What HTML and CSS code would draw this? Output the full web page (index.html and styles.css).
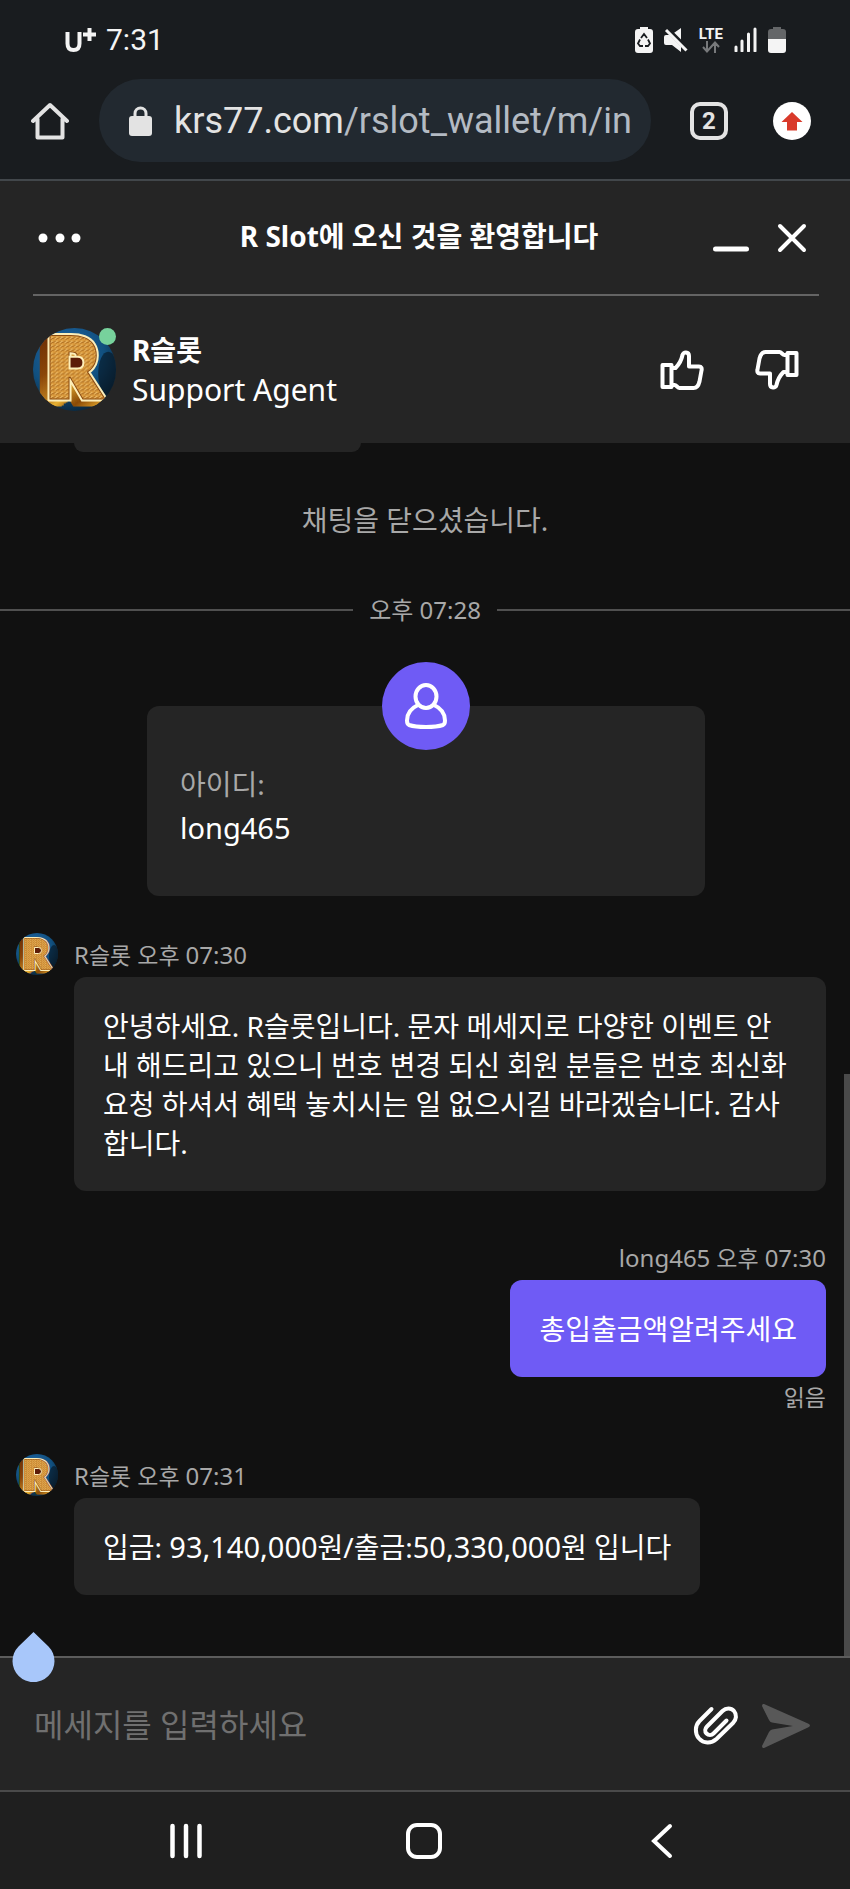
FILE: index.html
```html
<!DOCTYPE html>
<html lang="ko">
<head>
<meta charset="utf-8">
<meta name="viewport" content="width=device-width, initial-scale=1">
<title>R Slot</title>
<link rel="stylesheet" href="styles.css">
</head>
<body>
<svg class="defs" aria-hidden="true">
  <defs>
    <linearGradient id="gold" x1="0" y1="0" x2="1" y2="1">
      <stop offset="0" stop-color="#5c2204"/><stop offset=".3" stop-color="#8a4508"/>
      <stop offset=".55" stop-color="#e9b233"/><stop offset=".75" stop-color="#8a4a06"/>
      <stop offset="1" stop-color="#dda02a"/>
    </linearGradient>
    <radialGradient id="blue" cx=".4" cy=".3" r=".75">
      <stop offset="0" stop-color="#2368a8"/><stop offset=".6" stop-color="#11507f"/><stop offset="1" stop-color="#0a2438"/>
    </radialGradient>
    <pattern id="weave" width="5" height="4" patternUnits="userSpaceOnUse">
      <rect width="5" height="4" fill="#dc9c3e"/>
      <path d="M0 3l3-2M3 4l2-2" stroke="#a8681f" stroke-width="1"/>
      <path d="M2 3l3-2" stroke="#f3c878" stroke-width="1"/>
    </pattern>
    <clipPath id="disc"><circle cx="42" cy="42" r="42"/></clipPath>
    <symbol id="avatar" viewBox="0 0 84 84">
      <g clip-path="url(#disc)">
        <rect width="84" height="84" fill="url(#blue)"/>
        <ellipse cx="76" cy="46" rx="10" ry="22" fill="#07121c" opacity=".6"/>
        <g class="logo-letter" stroke="url(#gold)" fill="url(#gold)" stroke-width="10">
          <text x="5" y="75">R</text><text x="7" y="74">R</text><text x="9" y="72">R</text><text x="11" y="71">R</text>
        </g>
        <text class="logo-letter" x="14" y="69" stroke="#fdeeb8" stroke-width="12" fill="#fdeeb8">R</text>
        <text class="logo-letter" x="14" y="69" stroke="#8a4a12" stroke-width="8" fill="#8a4a12">R</text>
        <text class="logo-letter" x="14" y="69" stroke="url(#weave)" stroke-width="6" fill="url(#weave)">R</text>
        <path d="M37 29h8q6 0 6 6t-6 6h-8z" fill="#5c1c08" stroke="#fdeeb8" stroke-width="2"/>
      </g>
    </symbol>
    <symbol id="thumb" viewBox="0 0 44 44">
      <path d="M2.500 17h9v22h-9zM11.500 20h4c5-5 6-8 7-13 .5-3.500 6.500-3.500 6.500 1v10.500h10c2.500 0 3 2 2.500 4l-2 11c-.8 3.500-2.500 6.500-6 6.500h-14c-2 0-3-3-5-3h-3" fill="none" stroke="currentColor" stroke-width="4" stroke-linejoin="round" stroke-linecap="round"/>
    </symbol>
  </defs>
</svg>

<div class="screen">
  <header class="browser">
    <div class="status">
      <svg width="32" height="28" viewBox="0 0 32 28" aria-label="U+"><path d="M2.500 6v11.500q0 6.500 6 6.500t6-6.500V6" fill="none" stroke="#f4f4f4" stroke-width="4"/><path d="M18 8.500h13M24.500 2v13" stroke="#f4f4f4" stroke-width="4"/></svg>
      <span class="clock">7:31</span>
      <div class="status-icons">
        <svg width="18" height="26" viewBox="0 0 18 26"><path d="M5 0h8v2h2q3 0 3 3v18q0 3-3 3H3q-3 0-3-3V5q0-3 3-3h2z" fill="#f4f4f4"/><path d="M6 11l3-4 3 4M13 12.500l2 4-2 2.500h-3M5 12.500l-2 4 2 2.500h3" fill="none" stroke="#191c1f" stroke-width="1.800"/></svg>
        <svg width="24" height="26" viewBox="0 0 24 26"><path d="M0 10q0-2 2-2h5l10-7v24l-9-7H2q-2 0-2-2z" fill="#f4f4f4"/><path d="M1 0l23 23" stroke="#191c1f" stroke-width="5"/><path d="M2 3l20.500 20.500" stroke="#f4f4f4" stroke-width="3"/></svg>
        <div class="lte"><span>LTE</span><svg width="18" height="12" viewBox="0 0 18 12"><path d="M5 0v10M1 6l4 4.500L9 6M13 12V2M9 6l4-4.500L17 6" fill="none" stroke="#77797b" stroke-width="2"/></svg></div>
        <svg width="23" height="25" viewBox="0 0 23 25"><path d="M2 24v-4M8 24V14M14.500 24V7M21 24V2" stroke="#f4f4f4" stroke-width="3" stroke-linecap="round"/></svg>
        <svg width="18" height="26" viewBox="0 0 18 26"><path d="M5 0h8v2h2q3 0 3 3v7H0V5q0-3 3-3h2z" fill="#646668"/><path d="M0 12h18v11q0 3-3 3H3q-3 0-3-3z" fill="#f4f4f4"/></svg>
      </div>
    </div>
    <div class="toolbar">
      <button class="icon-btn" aria-label="홈"><svg width="38" height="38" viewBox="0 0 38 38"><path d="M2 19L19 3l17 16M6.500 17v18.500h25V17" fill="none" stroke="#e3e3e3" stroke-width="4" stroke-linejoin="round" stroke-linecap="round"/></svg></button>
      <button class="address">
        <svg width="24" height="30" viewBox="0 0 24 30"><rect x="0" y="10" width="23" height="20" rx="3" fill="#e3e3e3"/><path d="M6 11V7.500a5.500 5.500 0 0 1 11 0V11" fill="none" stroke="#e3e3e3" stroke-width="3"/></svg>
        <span class="url">krs77.com<span class="path">/rslot_wallet/m/in</span></span>
      </button>
      <button class="tabs" aria-label="탭 2개">2</button>
      <button class="icon-btn" aria-label="업데이트"><svg width="38" height="38" viewBox="0 0 38 38"><circle cx="19" cy="19" r="19" fill="#fff"/><path d="M19 10l10.500 10H24v8.500H14V20H8.500z" fill="#d93a2b"/></svg></button>
    </div>
  </header>

  <section class="chat-head">
    <div class="title-row">
      <div class="side-left"><button class="icon-btn" aria-label="메뉴"><svg width="44" height="10" viewBox="0 0 44 10"><g fill="#fff"><circle cx="5" cy="5" r="4.500"/><circle cx="22" cy="5" r="4.500"/><circle cx="38" cy="5" r="4.500"/></g></svg></button></div>
      <h1>R Slot에 오신 것을 환영합니다</h1>
      <div class="side-right">
        <button class="icon-btn" aria-label="최소화"><svg width="36" height="30" viewBox="0 0 36 30"><path d="M2.500 26h31" stroke="#fff" stroke-width="5" stroke-linecap="round"/></svg></button>
        <button class="icon-btn" aria-label="닫기"><svg width="30" height="30" viewBox="0 0 30 30"><path d="M3 3l24 24M27 3L3 27" stroke="#fff" stroke-width="4" stroke-linecap="round"/></svg></button>
      </div>
    </div>
    <div class="agent">
      <div class="agent-pic"><svg width="83" height="83" aria-hidden="true"><use href="#avatar"/></svg><span class="online"></span></div>
      <div class="agent-text"><strong>R슬롯</strong><span>Support Agent</span></div>
      <div class="rate">
        <button class="icon-btn" aria-label="좋아요"><svg width="44" height="44"><use href="#thumb"/></svg></button>
        <button class="icon-btn" aria-label="싫어요"><svg class="down" width="44" height="44"><use href="#thumb"/></svg></button>
      </div>
    </div>
  </section>

  <main class="chat">
    <div class="stub"></div>
    <p class="notice">채팅을 닫으셨습니다.</p>
    <div class="divider"><time>오후 07:28</time></div>
    <section class="profile">
      <div class="profile-icon"><svg width="44" height="46" viewBox="0 0 44 46"><ellipse cx="22" cy="13.500" rx="10.500" ry="11.500" fill="none" stroke="#fff" stroke-width="4"/><path d="M14 22Q3 27 3 37.500q0 3.500 2 4.500 6 2 17 2t17-2q2-1 2-4.500Q41 27 30 22" fill="none" stroke="#fff" stroke-width="4"/></svg></div>
      <dl><dt>아이디:</dt><dd>long465</dd></dl>
    </section>

    <article class="msg">
      <svg class="pic" width="42" height="42" aria-hidden="true"><use href="#avatar"/></svg>
      <div class="body">
        <div class="meta"><span class="lat">R</span>슬롯 오후 <span class="lat">07:30</span></div>
        <p class="bubble">안녕하세요. R슬롯입니다. 문자 메세지로 다양한 이벤트 안내 해드리고 있으니 번호 변경 되신 회원 분들은 번호 최신화 요청 하셔서 혜택 놓치시는 일 없으시길 바라겠습니다. 감사합니다.</p>
      </div>
    </article>

    <article class="msg mine">
      <div class="body">
        <div class="meta"><span class="lat">long465</span> 오후 <span class="lat">07:30</span></div>
        <p class="bubble">총입출금액알려주세요</p>
        <div class="read">읽음</div>
      </div>
    </article>

    <article class="msg">
      <svg class="pic" width="42" height="42" aria-hidden="true"><use href="#avatar"/></svg>
      <div class="body">
        <div class="meta"><span class="lat">R</span>슬롯 오후 <span class="lat">07:31</span></div>
        <p class="bubble">입금: <span class="lat">93,140,000</span>원/출금:<span class="lat">50,330,000</span>원 입니다</p>
      </div>
    </article>
    <div class="scroll-thumb"></div>
  </main>

  <form class="composer">
    <svg class="handle" width="43" height="50" viewBox="0 0 43 50" aria-hidden="true"><path d="M21.500 0L36.500 14.500A21 21 0 1 1 6.500 14.500z" fill="#a8c7fa"/></svg>
    <input type="text" aria-label="메세지" placeholder="메세지를 입력하세요">
    <button type="button" class="icon-btn" aria-label="파일 첨부"><svg width="46" height="42" viewBox="0 0 46 42"><path d="M18.500 4L6.500 16c-4.500 4.500-5 12.500-.5 17.500s12 5.500 17.500.5L40 18c3.500-3.500 4-8.500 1-12s-8-3.500-11.500 0L14 21.500c-2 2-2.500 5-.5 7s5 2 7 0l13-13" fill="none" stroke="#fff" stroke-width="4" stroke-linecap="round"/></svg></button>
    <button type="button" class="icon-btn" aria-label="보내기"><svg width="50" height="46" viewBox="0 0 50 46"><path d="M3 1l44 19.500q4 2 0 4L3 45q-2 .5-2-2l7-14q1-2 3-2.500l21-3.500-21-3.500q-2-.5-3-2.500L1 3q0-2.500 2-2z" fill="#585858"/></svg></button>
  </form>

  <nav class="system-nav">
    <button class="icon-btn" aria-label="최근 앱"><svg width="34" height="36" viewBox="0 0 34 36"><path d="M3.500 3v30M17 3v30M30.500 3v30" stroke="#fff" stroke-width="4.500" stroke-linecap="round"/></svg></button>
    <button class="icon-btn" aria-label="홈 화면"><svg width="38" height="38" viewBox="0 0 38 38"><rect x="3" y="3" width="32" height="32" rx="9" fill="none" stroke="#fff" stroke-width="4"/></svg></button>
    <button class="icon-btn" aria-label="뒤로"><svg width="22" height="36" viewBox="0 0 22 36"><path d="M19 3L3 18l16 15" fill="none" stroke="#fff" stroke-width="4" stroke-linecap="round"/></svg></button>
  </nav>
</div>
</body>
</html>
```
FILE: styles.css
```css
* { box-sizing: border-box; }

body {
  margin: 0;
  background: #111;
  color: #fff;
  font-family: "Noto Sans", "Noto Sans CJK KR", sans-serif;
  font-size: 28px;
  line-height: 39px;
}

p, h1, dl, dd { margin: 0; }
svg { display: block; flex: none; }
button { margin: 0; padding: 0; border: 0; background: none; color: inherit; font: inherit; }
.icon-btn { display: flex; align-items: center; justify-content: center; flex: none; }
.defs { position: absolute; width: 0; height: 0; }
.logo-letter { font-family: "Noto Sans", sans-serif; font-size: 80px; font-weight: 700; stroke-linejoin: miter; }

.screen { display: flex; flex-direction: column; min-height: 100vh; }

/* Browser chrome */
.browser { background: #191c1f; border-bottom: 2px solid #42474b; font-family: Roboto, sans-serif; }
.status { display: flex; align-items: center; height: 79px; padding: 0 64px 0 65px; }
.clock { margin-left: 9px; font-size: 30px; color: #f4f4f4; }
.status-icons { display: flex; align-items: center; gap: 11px; margin-left: auto; }
.lte { display: flex; flex-direction: column; align-items: center; color: #f4f4f4; font-size: 15px; font-weight: 700; line-height: 14px; }
.toolbar { display: flex; align-items: center; padding: 0 39px 17px 31px; }
.address { display: flex; align-items: center; flex: 1; min-width: 0; height: 83px; margin: 0 39px 0 30px; padding: 0 16px 0 30px; border-radius: 42px; background: #222930; }
.url { margin-left: 21px; overflow: hidden; white-space: nowrap; font-size: 36px; line-height: 46px; color: #e3e3e3; }
.path { color: #b4bbc3; }
.tabs { width: 38px; height: 38px; margin-right: 45px; border: 4px solid #e3e3e3; border-radius: 10px; color: #e3e3e3; font-size: 24px; font-weight: 700; line-height: 30px; }

/* Chat header */
.chat-head { padding: 0 31px 0 33px; background: #252525; }
.title-row { display: flex; align-items: center; height: 115px; border-bottom: 2px solid #646464; }
.title-row h1 { flex: 1; padding-bottom: 2px; text-align: center; font-size: 28px; font-weight: 700; }
.side-left { width: 92px; padding-left: 5px; }
.side-left .icon-btn { width: 44px; }
.side-right { display: flex; justify-content: flex-end; gap: 28px; width: 106px; padding-right: 12px; }
.agent { display: flex; align-items: center; height: 147px; padding-right: 20px; }
.agent-pic { position: relative; flex: none; }
.online { position: absolute; top: 0; right: 0; width: 17px; height: 17px; border-radius: 50%; background: #77d29c; }
.agent-text { display: flex; flex-direction: column; margin-left: 16px; }
.agent-text span { font-size: 30px; }
.rate { display: flex; gap: 51px; margin-left: auto; }
.down { transform: rotate(180deg); }

/* Conversation */
.chat { position: relative; flex: 1; padding: 0 24px 60px 16px; }
.stub { width: 287px; height: 9px; margin-left: 58px; border-radius: 0 0 12px 12px; background: #252525; }
.notice { margin: 49px -24px 0 -16px; text-align: center; color: #a8a8a8; }
.divider { display: flex; align-items: center; gap: 16px; margin: 54px -24px 0 -16px; color: #a8a8a8; font-size: 24px; line-height: 32px; }
.divider::before, .divider::after { content: ""; flex: 1; height: 2px; background: #505050; }
.profile { display: flex; flex-direction: column; align-items: center; margin: 80px 121px 0 131px; padding: 0 33px 46px; border-radius: 12px; background: #252525; }
.profile-icon { display: flex; align-items: center; justify-content: center; width: 88px; height: 88px; margin-top: -44px; border-radius: 50%; background: #6f5bf5; }
.profile dl { align-self: stretch; margin-top: 12px; line-height: 44px; }
.profile dt { color: #a8a8a8; }
.profile dd { font-size: 29px; }

.msg { display: flex; gap: 16px; margin-top: 37px; }
.body { display: flex; flex-direction: column; align-items: flex-start; min-width: 0; }
.meta { color: #a8a8a8; font-size: 23px; line-height: 44px; }
.meta .lat { font-size: 24px; }
.bubble { padding: 30px 29px 28px; border-radius: 12px; background: #252525; word-break: break-all; }
.bubble .lat { font-size: 29px; line-height: 1; }
.mine { justify-content: flex-end; margin-top: 45px; }
.mine .body { align-items: flex-end; }
.mine .bubble { background: #6f5bf5; }
.read { color: #a8a8a8; font-size: 23px; line-height: 40px; }
.scroll-thumb { position: absolute; right: 0; bottom: 0; width: 6px; height: 48%; background: #4a4a4a; }

/* Composer */
.composer { position: relative; display: flex; align-items: center; height: 134px; padding: 3px 39px 0 34px; border-top: 2px solid #5c5c5c; background: #252525; }
.composer input { flex: 1; min-width: 0; padding: 0 0 2px; border: 0; outline: 0; background: none; color: #fff; font: inherit; font-size: 32px; line-height: 48px; }
.composer input::placeholder { color: #707070; opacity: 1; }
.composer .icon-btn + .icon-btn { margin-left: 22px; }
.handle { position: absolute; top: -26px; left: 12px; }

/* System navigation */
.system-nav { display: flex; justify-content: space-between; height: 99px; padding: 0 166px 0 164px; border-top: 2px solid #4a4a4a; background: #1f1f1f; }
.system-nav .icon-btn { width: 44px; }
```
